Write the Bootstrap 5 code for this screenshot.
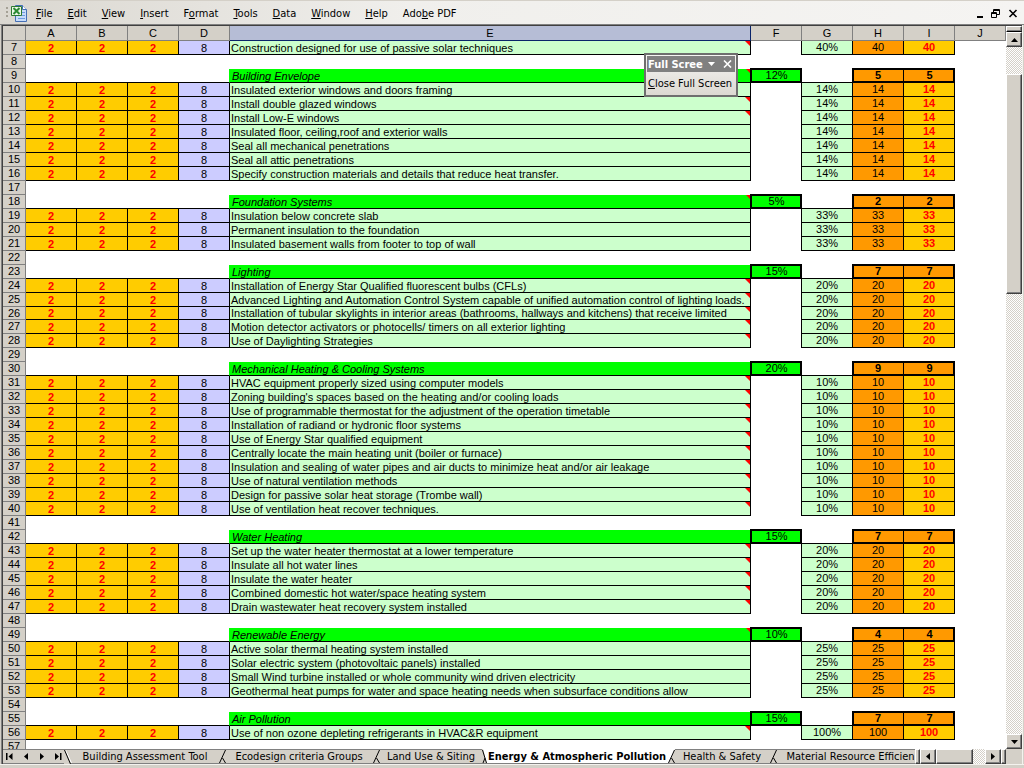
<!DOCTYPE html>
<html lang="en">
<head>
<meta charset="utf-8">
<meta name="viewport" content="width=device-width, initial-scale=1">
<title>Energy &amp; Atmospheric Pollution</title>
<link href="https://cdn.jsdelivr.net/npm/bootstrap@5.3.0/dist/css/bootstrap.min.css" rel="stylesheet">
<style>
:root{--face:#d4d0c8;--ui:"DejaVu Sans Condensed","DejaVu Sans",sans-serif;--cell:"Liberation Sans",Arial,sans-serif}
body{background:var(--face);font:11px/13px var(--ui);color:#000;height:100vh;overflow:hidden}
button{font:inherit;color:inherit;padding:0;border:0;background:none}
svg{display:block;flex:none}
a{color:inherit;text-decoration:none}
.menubar{height:24px;border-top:1px solid var(--face);background:linear-gradient(90deg,#dad7d0,#f0efec 40%,#f5f4f2);padding:1px 6px 0 5px}
.menubar .menus{gap:15px;margin-left:9px}
.frame{border-left:1px solid gray;border-right:1px solid #f4f2ee;margin-right:1px;margin-left:1px}
.frame-in{border-left:1px solid #404040;border-top:1px solid #404040}
.topline{height:1px;background:gray}
.gridarea{min-height:0;min-width:0;background:#fff;overflow:hidden}
.sheet{table-layout:fixed;width:100%;border-collapse:separate;border-spacing:0;font-family:var(--cell)}
.sheet .c-num{width:23px}.sheet .c-std{width:51px}
.sheet td,.sheet th{height:14px;padding:0;text-align:center;font-weight:400;border:0 solid #000;white-space:nowrap;position:relative;line-height:12px;vertical-align:top}
.sheet thead th{height:15px;line-height:14px;background:var(--face);border-color:gray;border-width:0 1px 1px 0}
.sheet thead th.sel{background:#b6bdd6;border-color:#0a246a}
.sheet tbody th{background:var(--face);border-color:gray;border-width:0 1px 1px 0;line-height:13px}
.sheet td.bb{border-bottom-width:1px}
.sheet td.br{border-right-width:1px}
.sheet td.gold{background:#fc0}
.sheet td.lilac{background:#ccf}
.sheet td.mint{background:#cfc}
.sheet td.lime{background:#0f0}
.sheet td.orange{background:#f90}
.sheet td.red{color:#f00;font-weight:700}
.sheet td.desc{text-align:left;padding-left:1px}
.sheet td.group{font-style:italic;padding-left:2px}
.sheet td.low{padding-top:1px}
.sheet tr.short>*{height:13px;line-height:12px}
.sheet tr.short>td.low{padding-top:0}
.sheet td.limeedge{border-right:1px solid #0f0}
.sheet td.thick::after{content:"";position:absolute;inset:-1px 0 0 -1px;border:2px solid #000;z-index:1}
.sheet td.thickl::after{right:-1px;border-right:0}
.sheet td.thickr::after{left:0;border-left:0}
.sheet td.note::before{content:"";position:absolute;top:0;right:0;border-style:solid;border-width:0 5px 5px 0;border-color:transparent #f00}
.vscroll{width:16px}
.track{background:repeating-conic-gradient(#fff 0 25%,var(--face) 0 50%) 0 0/2px 2px}
.raised{background:var(--face);border:1px solid;border-color:#fff #404040 #404040 #fff;box-shadow:inset -1px -1px 0 gray}
.btn-v{height:15px;width:100%}
.splitbox{height:6px;border-bottom:1px solid #000}
.v-gap{height:27px}.v-thumb{height:220px}
.tabs{height:15px}
.tabnav{width:61px;border-top:1px solid gray;border-bottom:1px solid gray;padding-left:3px;gap:8px}
.tabstrip{min-width:0;overflow:hidden}
.sheettab{border-top:1px solid gray;border-bottom:1px solid gray;background:var(--face);line-height:14px;white-space:nowrap;text-align:center;flex:none}
.sheettab.active{background:#fff;border-top-color:#fff;font-weight:700}
.w-a{width:146px}.w-b{width:146px}.w-c{width:102px}.w-d{width:180px}.w-e{width:94px}.w-f{padding-left:9px}
.divider{width:5px}
.hbtn{width:16px}.h-thumb{width:37px}.h-gap{width:12px}.h-end{width:5px}.corner{width:16px}
.foot{height:4px;border-top:1px solid #f4f2ee}
.floatbar{position:absolute;z-index:5;top:27px;right:284px;width:94px;height:44px;border:2px solid #6e6e6e;background:linear-gradient(#f6f5f3,#dcd9d2);padding:1px}
.floatbar .cap{background:gray;color:#fff;font-weight:700;height:16px;padding:0 3px 0 1px}
.floatbar .cmd{height:22px;padding-left:1px;white-space:nowrap}
</style>
</head>
<body class="d-flex flex-column">
<nav class="menubar d-flex align-items-center flex-shrink-0" aria-label="Menu">
<svg width="22" height="20" viewBox="0 0 22 20"><path d="M1 4h2v2H1zM1 8h2v2H1zM1 12h2v2H1z" fill="#a5a196"/><path d="M10.500 2.500h7l4 4v12h-11z" fill="#c7dcfa" stroke="#456fb5"/><path d="M17.500 2.500v4h4" fill="#fff" stroke="#456fb5"/><path d="M13 9.500h7M13 12.500h7M13 15.500h7" stroke="#6f9be0"/><path d="M6.500 3.500h10v9h-10z" fill="#eef7e9" stroke="#2d7a32"/><path d="M8.500 5l6 6M14.500 5l-6 6" stroke="#2b8b34" stroke-width="2"/></svg>
<div class="menus d-flex flex-grow-1">
<button type="button"><u>F</u>ile</button><button type="button"><u>E</u>dit</button><button type="button"><u>V</u>iew</button><button type="button"><u>I</u>nsert</button><button type="button">F<u>o</u>rmat</button><button type="button"><u>T</u>ools</button><button type="button"><u>D</u>ata</button><button type="button"><u>W</u>indow</button><button type="button"><u>H</u>elp</button><button type="button">Ado<u>b</u>e PDF</button>
</div>
<div class="d-flex gap-2">
<button type="button" aria-label="Minimize"><svg width="7" height="9"><path d="M1 7h6v2H1z"/></svg></button>
<button type="button" aria-label="Restore"><svg width="9" height="9" fill="none" stroke="#000"><path d="M2.500 3V.5h6v5H6M2 1.500h7M.5 3.500h5v5h-5zM0 4.500h6"/></svg></button>
<button type="button" aria-label="Close"><svg width="10" height="9" fill="none" stroke="#000" stroke-width="1.600"><path d="M1.500 1l7 7M8.500 1l-7 7"/></svg></button>
</div>
</nav>
<div class="topline flex-shrink-0"></div>
<div class="frame d-flex flex-column flex-grow-1 overflow-hidden">
<div class="frame-in d-flex flex-column flex-grow-1 overflow-hidden position-relative">
<div class="floatbar">
<div class="cap d-flex align-items-center"><span class="flex-grow-1">Full Scree</span><svg width="7" height="4" class="me-2"><path d="M0 0h7L3.500 4z" fill="#fff"/></svg><svg width="9" height="8" fill="none" stroke="#fff" stroke-width="1.600"><path d="M1 0.500l7 7M8 .5l-7 7"/></svg></div>
<button type="button" class="cmd"><u>C</u>lose Full Screen</button>
</div>
<div class="d-flex flex-grow-1 overflow-hidden">
<div class="gridarea flex-grow-1">
<table class="sheet">
<colgroup><col class="c-num"><col class="c-std"><col class="c-std"><col class="c-std"><col class="c-std"><col><col class="c-std"><col class="c-std"><col class="c-std"><col class="c-std"><col class="c-std"></colgroup>
<thead><tr><th></th><th>A</th><th>B</th><th>C</th><th>D</th><th class="sel">E</th><th>F</th><th>G</th><th>H</th><th>I</th><th>J</th></tr></thead>
<tbody id="rows"></tbody>
</table>
</div>
<div class="vscroll d-flex flex-column flex-shrink-0">
<div class="splitbox raised"></div>
<button type="button" class="raised btn-v d-flex align-items-center justify-content-center" aria-label="Scroll up"><svg width="7" height="4"><path d="M3.500 0L7 4H0z"/></svg></button>
<div class="track v-gap"></div><div class="raised v-thumb"></div><div class="track flex-grow-1"></div>
<button type="button" class="raised btn-v d-flex align-items-center justify-content-center" aria-label="Scroll down"><svg width="7" height="4"><path d="M0 0h7L3.500 4z"/></svg></button>
</div>
</div>
<div class="tabs d-flex flex-shrink-0">
<div class="tabnav d-flex align-items-center flex-shrink-0">
<button type="button" aria-label="First sheet"><svg width="8" height="7"><path d="M0 0h1.500v7H0zM6.500 0v7L2.500 3.500z"/></svg></button>
<button type="button" aria-label="Previous sheet"><svg width="8" height="7"><path d="M6 0v7L2 3.500z"/></svg></button>
<button type="button" aria-label="Next sheet"><svg width="8" height="7"><path d="M2 0v7l4-3.500z"/></svg></button>
<button type="button" aria-label="Last sheet"><svg width="8" height="7"><path d="M1 0v7l4-3.500zM6 0h1.500v7H6z"/></svg></button>
</div>
<div class="tabstrip d-flex flex-grow-1">
<svg width="8" height="15"><path d="M0 0h8v15H0z" fill="#d4d0c8"/><path d="M0 .5h8M7 14.500h1" stroke="gray"/><path d="M1.500 1l6 13" stroke="#fff"/><path d="M.5 1l6 14" stroke="#000"/></svg>
<a href="#" class="sheettab w-a">Building Assessment Tool</a>
<svg width="8" height="15"><path d="M0 0h8v15H0z" fill="#d4d0c8"/><path d="M0 .5h8M0 14.500h8" stroke="gray"/><path d="M7.500 1L1.500 14M4.500 9l3 5" stroke="#000" fill="none"/></svg>
<a href="#" class="sheettab w-b">Ecodesign criteria Groups</a>
<svg width="8" height="15"><path d="M0 0h8v15H0z" fill="#d4d0c8"/><path d="M0 .5h8M0 14.500h8" stroke="gray"/><path d="M7.500 1L1.500 14M4.500 9l3 5" stroke="#000" fill="none"/></svg>
<a href="#" class="sheettab w-c">Land Use &amp; Siting</a>
<svg width="5" height="15"><path d="M0 0h5v15H0z" fill="#fff"/><path d="M0 0h1l4 15H0z" fill="#d4d0c8"/><path d="M0 14.500h5" stroke="gray"/><path d="M.5 1l4 13M3 9L1 14" stroke="#000" fill="none"/></svg>
<a href="#" class="sheettab active w-d">Energy &amp; Atmospheric Pollution</a>
<svg width="8" height="15"><path d="M0 0h8v15H0z" fill="#fff"/><path d="M8 0L1.500 15H8z" fill="#d4d0c8"/><path d="M0 14.500h8" stroke="gray"/><path d="M7.500 1L1.500 14M4.500 9l3 5" stroke="#000" fill="none"/></svg>
<a href="#" class="sheettab w-e">Health &amp; Safety</a>
<svg width="8" height="15"><path d="M0 0h8v15H0z" fill="#d4d0c8"/><path d="M0 .5h8M0 14.500h8" stroke="gray"/><path d="M7.500 1L1.500 14M4.500 9l3 5" stroke="#000" fill="none"/></svg>
<a href="#" class="sheettab w-f flex-grow-1">Material Resource Efficien</a>
</div>
<div class="divider raised flex-shrink-0"></div>
<button type="button" class="raised hbtn d-flex align-items-center justify-content-center flex-shrink-0" aria-label="Scroll left"><svg width="4" height="7"><path d="M4 0v7L0 3.500z"/></svg></button>
<div class="raised h-thumb flex-shrink-0"></div><div class="track h-gap flex-shrink-0"></div>
<button type="button" class="raised hbtn d-flex align-items-center justify-content-center flex-shrink-0" aria-label="Scroll right"><svg width="4" height="7"><path d="M0 0v7l4-3.500z"/></svg></button>
<div class="raised h-end flex-shrink-0"></div><div class="corner flex-shrink-0"></div>
</div>
</div>
</div>
<div class="foot flex-shrink-0"></div>
<script>
// Sections of the sheet: [title, share, points, item weight, items]; "*" marks a cell that carries a comment.
const sections = [
 [null, null, null, 40, ["*Construction designed for use of passive solar techniques"]],
 ["*Building Envelope", 12, 5, 14, ["Insulated exterior windows and doors framing","*Install double glazed windows","*Install Low-E windows","Insulated floor, ceiling,roof and exterior walls","Seal all mechanical penetrations","Seal all attic penetrations","Specify construction materials and details that reduce heat transfer."]],
 ["*Foundation Systems", 5, 2, 33, ["Insulation below concrete slab","Permanent insulation to the foundation","Insulated basement walls from footer to top of wall"]],
 ["Lighting", 15, 7, 20, ["*Installation of Energy Star Qualified fluorescent bulbs (CFLs)","*Advanced Lighting and Automation Control System capable of unified automation control of lighting loads.","*Installation of tubular skylights in interior areas (bathrooms, hallways and kitchens) that receive limited","*Motion detector activators or photocells/ timers on all exterior lighting","*Use of Daylighting Strategies"]],
 ["Mechanical Heating & Cooling Systems", 20, 9, 10, ["*HVAC equipment properly sized using computer models","*Zoning building's spaces based on the heating and/or cooling loads","*Use of programmable thermostat for the adjustment of the operation timetable","*Installation of radiand or hydronic floor systems","*Use of Energy Star qualified equipment","*Centrally locate the main heating unit (boiler or furnace)","*Insulation and sealing of water pipes and air ducts to minimize heat and/or air leakage","*Use of natural ventilation methods","*Design for passive solar heat storage (Trombe wall)","*Use of ventilation heat recover techniques."]],
 ["Water Heating", 15, 7, 20, ["*Set up the water heater thermostat at a lower temperature","*Insulate all hot water lines","*Insulate the water heater","*Combined domestic hot water/space heating system","*Drain wastewater heat recovery system installed"]],
 ["*Renewable Energy", 10, 4, 25, ["Active solar thermal heating system installed","Solar electric system (photovoltaic panels) installed","Small Wind turbine installed or whole community wind driven electricity","Geothermal heat pumps for water and space heating needs when subsurface conditions allow"]],
 ["Air Pollution", 15, 7, 100, ["*Use of non ozone depleting refrigerants in HVAC&R equipment"]]
];
const body = document.getElementById("rows");
let n = 7;
function row(cells) {
  const tr = body.insertRow();
  if (n === 26) tr.className = "short";
  const th = document.createElement("th");
  th.scope = "row";
  th.textContent = n++;
  tr.append(th);
  for (const [cls, text] of cells) {
    const td = tr.insertCell();
    td.className = cls;
    td.textContent = text ?? "";
  }
}
const blank = (k, cls = "") => Array.from({length: k}, () => [cls]);
const strip = t => t.replace("*", ""), note = t => t[0] === "*" ? " note" : "";
for (const [title, share, points, weight, items] of sections) {
  if (title) row([...blank(3, "bb"), ["bb limeedge"], ["desc group low lime bb" + note(title), strip(title)],
    ["lime thick", share + "%"], ["bb"], ["orange br thick thickl fw-bold", points], ["orange thick thickr fw-bold", points], [""]]);
  for (const t of items) row([...Array(3).fill(["gold red low bb br", 2]), ["lilac low bb br", 8],
    ["desc low mint bb br" + note(t), strip(t)], ["br"], ["mint bb br", weight + "%"], ["orange bb br", weight], ["gold red bb br", weight], [""]]);
  row(blank(10));
}
</script>
<script src="https://cdn.jsdelivr.net/npm/bootstrap@5.3.0/dist/js/bootstrap.bundle.min.js"></script>
</body>
</html>
